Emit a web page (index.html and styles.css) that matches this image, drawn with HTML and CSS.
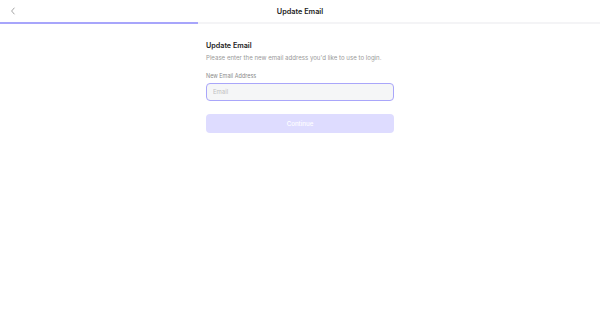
FILE: index.html
```html
<!DOCTYPE html>
<html lang="en">
  <head>
    <meta charset="UTF-8" />
    <meta name="viewport" content="width=device-width, initial-scale=1.0" />
    <title>Update Email</title>
    <link rel="stylesheet" href="styles.css">
  </head>
  <body>
    <header class="topbar">
      <button class="back" aria-label="Back">
        <svg width="6" height="8" viewBox="0 0 6 8"><path d="M4.2 1 L1.6 4 L4.2 7" fill="none" stroke="#9a9a9a" stroke-width="0.9" stroke-linecap="round" stroke-linejoin="round"/></svg>
      </button>
      <h1 class="topbar-title">Update Email</h1>
      <span class="spacer"></span>
    </header>
    <div class="progress"><div class="progress-fill" style="width: 33%"></div></div>

    <main class="content">
      <div class="form">
        <h2 class="heading">Update Email</h2>
        <p class="sub">Please enter the new email address you'd like to use to login.</p>
        <label class="label" for="email">New Email Address</label>
        <input class="input" id="email" type="email" placeholder="Email" autofocus />
        <button class="continue" disabled>Continue</button>
      </div>
    </main>
  </body>
</html>
```

FILE: styles.css
```css
* {
  padding: 0;
  margin: 0;
  box-sizing: border-box;
}
body {
  background: #fff;
  font-family: Inter, "Noto Sans", sans-serif;
  color: #1f1f1f;
}
.topbar {
  height: 22px;
  display: flex;
  align-items: center;
  justify-content: space-between;
  padding: 0 8px;
}
.back {
  width: 10px;
  height: 10px;
  border: none;
  background: none;
  display: flex;
  align-items: center;
  justify-content: center;
}
.topbar-title {
  font-size: 7.3px;
  font-weight: 600;
  color: #222;
}
.spacer {
  width: 10px;
}
.progress {
  height: 1.5px;
  background: #f4f4f6;
}
.progress-fill {
  height: 100%;
  background: #a7a5fb;
}
.content {
  display: flex;
  justify-content: center;
  padding-top: 16px;
}
.form {
  width: 188px;
  display: flex;
  flex-direction: column;
}
.heading {
  font-size: 7.2px;
  font-weight: 600;
  color: #222;
  line-height: 12px;
}
.sub {
  font-size: 6.1px;
  color: #999;
  margin-top: 1px;
  line-height: 9px;
}
.label {
  font-size: 5.5px;
  color: #8a8a8a;
  margin-top: 10px;
  line-height: 8px;
}
.input {
  margin-top: 3px;
  height: 18px;
  border: 1.2px solid #a9a6fa;
  border-radius: 4px;
  background: #f5f6f7;
  padding: 0 6px;
  font-family: inherit;
  font-size: 6px;
  color: #333;
  outline: none;
  caret-color: #555;
}
.input::placeholder {
  color: #c0c0c0;
}
.continue {
  margin-top: 13px;
  height: 19px;
  border: none;
  border-radius: 4px;
  background: #dedcff;
  color: #fff;
  font-family: inherit;
  font-size: 6.2px;
  font-weight: 500;
}
```
